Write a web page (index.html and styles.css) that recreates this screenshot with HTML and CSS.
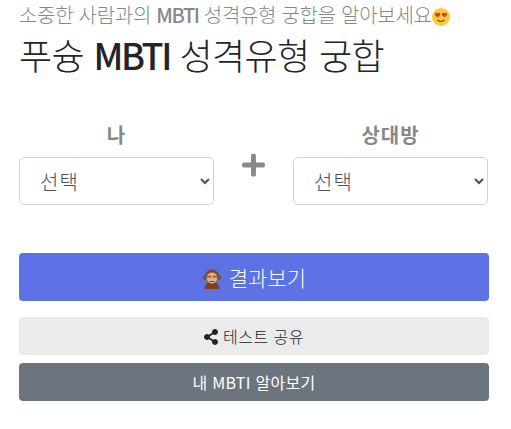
FILE: index.html
```html
<!DOCTYPE html>
<html lang="ko">
<head>
  <meta charset="UTF-8" />
  <meta name="viewport" content="width=device-width, initial-scale=1.0"/>
  <title>푸슝 MBTI 성격유형 궁합</title>
  <link rel="stylesheet" href="styles.css">
</head>
<body>

<div class="container">
  <!-- Heading -->
  <p class="lead">소중한 사람과의 <b>MBTI</b> 성격유형 궁합을 알아보세요<svg class="emoji-love" viewBox="0 0 18 18"><circle cx="9" cy="9" r="9" fill="#fbc93a"/><path d="M3 6.2c0-1.6 2-1.9 2.6-.7.6-1.2 2.6-.9 2.6.7 0 1.4-1.6 2.2-2.6 3-1-.8-2.6-1.6-2.6-3z" fill="#d8392b"/><path d="M9.8 6.2c0-1.6 2-1.9 2.6-.7.6-1.2 2.6-.9 2.6.7 0 1.4-1.6 2.2-2.6 3-1-.8-2.6-1.6-2.6-3z" fill="#d8392b"/><path d="M5.8 12.2c1.6 1.7 4.8 1.7 6.4 0" fill="none" stroke="#5b4310" stroke-width="1.2" stroke-linecap="round"/></svg></p>
  <h1 class="title">푸슝 <span class="title-latin">MBTI</span> 성격유형 궁합</h1>

  <!-- Pickers -->
  <div class="pickers">
    <div class="picker">
      <label class="picker-label" for="me">나</label>
      <select id="me" class="picker-select">
        <option>선택</option>
      </select>
    </div>
    <svg class="plus" viewBox="0 0 448 512"><path d="M416 208H272V64c0-17.67-14.33-32-32-32h-32c-17.67 0-32 14.33-32 32v144H32c-17.67 0-32 14.33-32 32v32c0 17.67 14.33 32 32 32h144v144c0 17.67 14.33 32 32 32h32c17.67 0 32-14.33 32-32V304h144c17.67 0 32-14.33 32-32v-32c0-17.67-14.33-32-32-32z"/></svg>
    <div class="picker">
      <label class="picker-label" for="other">상대방</label>
      <select id="other" class="picker-select">
        <option>선택</option>
      </select>
    </div>
  </div>

  <!-- Actions -->
  <button class="btn btn-result"><svg class="emoji-monkey" viewBox="0 0 20 20"><path d="M2.500 20c0-4 2.500-7 7.500-7s7.500 3 7.500 7z" fill="#7d4219"/><circle cx="3" cy="8.500" r="2.300" fill="#7d4f2c"/><circle cx="17" cy="8.500" r="2.300" fill="#7d4f2c"/><circle cx="10" cy="7.500" r="7.200" fill="#7d4f2c"/><ellipse cx="10" cy="9" rx="5.400" ry="5.600" fill="#dfb08c"/><path d="M4.800 6.800h4.400v1.800H4.800zM10.800 6.800h4.400v1.800h-4.400z" fill="#8f5f3d"/><path d="M7.500 12.500h5" stroke="#7d4f2c" stroke-width="1"/></svg> 결과보기</button>
  <button class="btn btn-share"><svg class="share" viewBox="0 0 448 512"><path d="M352 320c-22.608 0-43.387 7.819-59.79 20.895l-102.486-64.054a96.551 96.551 0 0 0 0-41.683l102.486-64.054C308.613 184.181 329.392 192 352 192c53.019 0 96-42.981 96-96S405.019 0 352 0s-96 42.981-96 96c0 7.158.79 14.13 2.276 20.841L155.79 180.895C139.387 167.819 118.608 160 96 160c-53.019 0-96 42.981-96 96s42.981 96 96 96c22.608 0 43.387-7.819 59.79-20.895l102.486 64.054A96.301 96.301 0 0 0 256 416c0 53.019 42.981 96 96 96s96-42.981 96-96-42.981-96-96-96z"/></svg> 테스트 공유</button>
  <button class="btn btn-mine">내 MBTI 알아보기</button>
</div>

</body>
</html>
```

FILE: styles.css
```css
body {
  font-family: "Noto Sans CJK KR", "Noto Sans", sans-serif;
  background: white;
  margin: 0;
  padding: 0;
}
.container {
  padding: 0 22px 0 19px;
}
.lead {
  margin: 0;
  height: 30px;
  font-size: 20px;
  font-weight: 300;
  line-height: 30px;
  color: #85888c;
  letter-spacing: -0.3px;
  white-space: nowrap;
}
.lead b {
  font-weight: 500;
  letter-spacing: -1.4px;
}
.emoji-love {
  width: 18px;
  height: 18px;
  vertical-align: -3px;
}
.title {
  margin: 1px 0 0;
  height: 46px;
  font-size: 36px;
  font-weight: 300;
  line-height: 46px;
  color: #212529;
  letter-spacing: -0.6px;
  white-space: nowrap;
}
.title-latin {
  font-weight: 500;
  letter-spacing: -2.4px;
}
.pickers {
  display: flex;
  justify-content: space-between;
  margin: 39px 1px 0 0;
}
.picker {
  width: 195px;
  text-align: center;
}
.picker-label {
  display: block;
  height: 41px;
  padding-top: 3px;
  box-sizing: border-box;
  font-size: 20px;
  font-weight: 700;
  line-height: 32px;
  letter-spacing: 1px;
  color: #888888;
}
.picker-select {
  display: block;
  width: 100%;
  height: 48px;
  padding: 0 16px;
  font-family: inherit;
  font-size: 20px;
  font-weight: 300;
  letter-spacing: 1px;
  color: #495057;
  background: white;
  border: 1px solid #ced4da;
  border-radius: 5px;
}
.plus {
  width: 23px;
  height: 26px;
  margin-top: 36px;
  fill: #868a8e;
}
.btn {
  display: block;
  width: 100%;
  font-family: inherit;
  border: none;
  border-radius: 4px;
  cursor: pointer;
}
.btn-result {
  height: 48px;
  margin-top: 48px;
  font-size: 21px;
  font-weight: 300;
  color: white;
  background-color: #5d72e4;
}
.emoji-monkey {
  width: 20px;
  height: 20px;
  vertical-align: -3px;
  margin-right: 1px;
}
.btn-share {
  height: 38px;
  margin-top: 16px;
  font-size: 16px;
  font-weight: 300;
  letter-spacing: 0.5px;
  color: #212529;
  background-color: #ebebeb;
}
.share {
  width: 14px;
  height: 16px;
  vertical-align: -2px;
  fill: #212529;
}
.btn-mine {
  height: 38px;
  margin-top: 8px;
  font-size: 16px;
  font-weight: 400;
  letter-spacing: 0.3px;
  color: white;
  background-color: #6c757d;
}
```
